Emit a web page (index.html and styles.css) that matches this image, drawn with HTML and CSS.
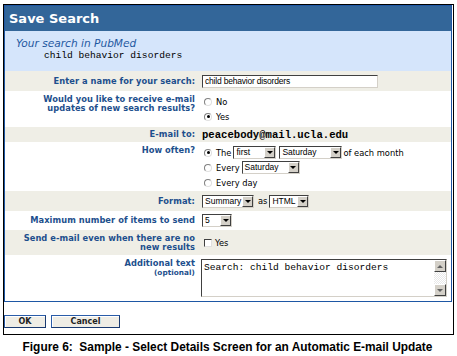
FILE: index.html
```html
<!DOCTYPE html>
<html>
<head>
<meta charset="utf-8">
<link rel="stylesheet" href="styles.css">
</head>
<body>
<div class="frame">
  <div class="panel">
    <div class="title">Save Search</div>
    <div class="summary">
      <div class="your">Your search in PubMed</div>
      <div class="query">child behavior disorders</div>
    </div>
    <div class="row alt h1">
      <div class="lbl">Enter a name for your search:</div>
      <div class="ctl"><span class="input">child behavior disorders</span></div>
    </div>
    <div class="row h2 top">
      <div class="lbl pt">Would you like to receive e-mail<br>updates of new search results?</div>
      <div class="ctl list">
        <div class="opt"><span class="radio"></span>No</div>
        <div class="opt"><span class="radio on"></span>Yes</div>
      </div>
    </div>
    <div class="row alt h3">
      <div class="lbl">E-mail to:</div>
      <div class="ctl"><span class="email">peacebody@mail.ucla.edu</span></div>
    </div>
    <div class="row h4 top">
      <div class="lbl pt">How often?</div>
      <div class="ctl list">
        <div class="opt"><span class="radio on"></span>The <span class="sel w43"><span class="v">first</span><span class="arr"></span></span><span class="sel w63"><span class="v">Saturday</span><span class="arr"></span></span> of each month</div>
        <div class="opt"><span class="radio"></span>Every <span class="sel w58"><span class="v">Saturday</span><span class="arr"></span></span></div>
        <div class="opt"><span class="radio"></span>Every day</div>
      </div>
    </div>
    <div class="row alt h5">
      <div class="lbl">Format:</div>
      <div class="ctl"><span class="sel w52"><span class="v">Summary</span><span class="arr"></span></span><span class="as">as</span><span class="sel w40"><span class="v">HTML</span><span class="arr"></span></span></div>
    </div>
    <div class="row h6">
      <div class="lbl">Maximum number of items to send</div>
      <div class="ctl"><span class="sel w30"><span class="v">5</span><span class="arr"></span></span></div>
    </div>
    <div class="row alt h7">
      <div class="lbl">Send e-mail even when there are no<br>new results</div>
      <div class="ctl"><span class="check"></span><span class="opttext">Yes</span></div>
    </div>
    <div class="row h8 top">
      <div class="lbl pt">Additional text<br><span class="small">(optional)</span></div>
      <div class="ctl tactl">
        <div class="ta">
          <div class="tatext">Search: child behavior disorders</div>
          <div class="sb"><span class="sbtn up"></span><span class="track"></span><span class="sbtn down"></span></div>
        </div>
      </div>
    </div>
  </div>
  <div class="buttons">
    <span class="btn ok">OK</span>
    <span class="btn cancel">Cancel</span>
  </div>
</div>
<div class="caption">Figure 6:&nbsp; Sample - Select Details Screen for an Automatic E-mail Update</div>
</body>
</html>
```
FILE: styles.css
```css
html, body { margin: 0; padding: 0; background: #fff; }
body { font-family: "DejaVu Sans", Verdana, sans-serif; }

.frame {
  margin: 4px 0 0 3px;
  width: 449px;
  border: 1px solid #000;
}
.panel {
  border: 1px solid #1e57a4;
  margin-right: 1px;
}
.title {
  height: 25px;
  background: #336699;
  color: #fff;
  font: bold 13px "DejaVu Sans", sans-serif;
  line-height: 25px;
  padding-left: 4px;
}
.summary {
  height: 40px;
  background: #d5e5fb;
  box-sizing: border-box;
  padding-top: 6px;
}
.your {
  font: oblique 10.6px "DejaVu Sans", sans-serif;
  color: #1f58a0;
  line-height: 13px;
  padding-left: 11px;
}
.query {
  font: 9.6px "Liberation Mono", monospace;
  color: #000;
  line-height: 11px;
  padding-left: 39px;
}

.row { display: flex; align-items: center; }
.row.top { align-items: flex-start; }
.alt { background: #efeee6; }
.h1 { height: 20px; }
.h2 { height: 36px; }
.h3 { height: 15px; }
.h4 { height: 49px; }
.h5 { height: 20px; }
.h6 { height: 19px; }
.h7 { height: 25px; }
.h8 { height: 46px; }

.lbl {
  width: 190px;
  flex: none;
  text-align: right;
  font: bold 8.3px "DejaVu Sans", sans-serif;
  line-height: 9px;
  color: #1d4f8d;
  letter-spacing: 0.05px;
}
.lbl.pt { padding-top: 4px; }
.lbl .small { font-size: 7.3px; }
.ctl {
  padding-left: 7px;
  display: flex;
  align-items: center;
  font: 8.3px "DejaVu Sans", sans-serif;
  color: #000;
}
.ctl.list { display: block; padding-top: 3px; }
.opt { display: flex; align-items: center; height: 15px; padding-left: 2px; }

.input {
  display: block;
  width: 176px;
  height: 13px;
  box-sizing: border-box;
  border: 1px solid;
  border-color: #404040 #d4d0c8 #d4d0c8 #404040;
  background: #fff;
  font: 8.5px "Liberation Sans", sans-serif;
  line-height: 11px;
  padding-left: 2px;
  letter-spacing: -0.2px;
}
.email {
  font: bold 10.6px "Liberation Mono", monospace;
  color: #000;
}

.radio {
  width: 8px; height: 8px;
  box-sizing: border-box;
  border-radius: 50%;
  border: 1px solid;
  border-color: #808080 #e0e0e0 #e0e0e0 #808080;
  background: #fff;
  margin-right: 4px;
  display: inline-flex;
  align-items: center;
  justify-content: center;
  flex: none;
}
.radio.on::after {
  content: "";
  width: 3px; height: 3px;
  border-radius: 50%;
  background: #000;
}
.check {
  width: 8px; height: 8px;
  box-sizing: border-box;
  border: 1px solid;
  border-color: #404040 #e0e0e0 #e0e0e0 #404040;
  background: #fff;
  margin: 0 3px 0 2px;
}

.sel {
  display: inline-flex;
  align-items: center;
  height: 13px;
  box-sizing: border-box;
  border: 1px solid;
  border-color: #404040 #d4d0c8 #d4d0c8 #404040;
  background: #fff;
  font: 8.5px "Liberation Sans", sans-serif;
  margin-right: 2px;
}
.opt .sel { margin-left: 2px; margin-right: 1px; }
.sel .v { flex: 1; padding-left: 2px; line-height: 11px; }
.sel .arr {
  width: 11px; height: 11px;
  box-sizing: border-box;
  background: #d4d0c8;
  border: 1px solid;
  border-color: #fff #404040 #404040 #fff;
  display: flex;
  align-items: center;
  justify-content: center;
}
.sel .arr::after {
  content: "";
  border-top: 3px solid #000;
  border-left: 3px solid transparent;
  border-right: 3px solid transparent;
}
.w43 { width: 43px; }
.w63 { width: 63px; }
.w58 { width: 58px; }
.w52 { width: 52px; }
.w40 { width: 40px; }
.w30 { width: 30px; }
.as { margin: 0 2px 0 2px; }

.tactl { padding-top: 4px; padding-left: 6px; }
.ta {
  width: 246px;
  height: 38px;
  box-sizing: border-box;
  border: 1px solid;
  border-color: #404040 #d4d0c8 #d4d0c8 #404040;
  background: #fff;
  display: flex;
}
.tatext {
  flex: 1;
  font: 9.6px "Liberation Mono", monospace;
  line-height: 11px;
  padding: 2px 0 0 2px;
}
.sb {
  width: 12px;
  display: flex;
  flex-direction: column;
}
.track {
  flex: 1;
  background: repeating-conic-gradient(#e8e8e8 0 25%, #fff 0 50%) 0 0 / 2px 2px;
}
.sbtn {
  height: 12px;
  box-sizing: border-box;
  background: #d4d0c8;
  border: 1px solid;
  border-color: #fff #404040 #404040 #fff;
  display: flex;
  align-items: center;
  justify-content: center;
}
.sbtn.up::after {
  content: "";
  border-bottom: 3px solid #606060;
  border-left: 3px solid transparent;
  border-right: 3px solid transparent;
}
.sbtn.down::after {
  content: "";
  border-top: 3px solid #606060;
  border-left: 3px solid transparent;
  border-right: 3px solid transparent;
}

.buttons {
  display: flex;
  gap: 5px;
  padding: 13px 0 6px 0;
}
.btn {
  height: 13px;
  box-sizing: border-box;
  border: 1px solid #2a5ca8;
  border-right-color: #1a3a70;
  border-bottom-color: #1a3a70;
  background: #efede5;
  box-shadow: inset 1px 1px 0 #fff;
  font: bold 8px "DejaVu Sans", sans-serif;
  line-height: 11px;
  text-align: center;
  color: #222;
}
.ok { width: 42px; }
.cancel { width: 69px; }

.caption {
  text-align: center;
  font: bold 11.9px "Liberation Sans Narrow", "Liberation Sans", sans-serif;
  margin-top: 5px;
  padding-right: 2px;
  color: #000;
}
```
